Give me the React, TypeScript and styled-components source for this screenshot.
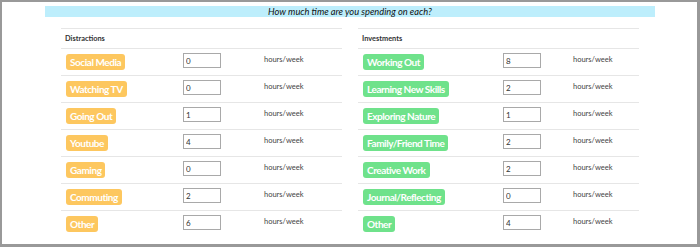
import styled, { createGlobalStyle } from 'styled-components';

const GlobalStyle = createGlobalStyle`
  html, body {
    margin: 0;
    padding: 0;
    background: #ffffff;
  }
  body {
    font-family: Lato, "Liberation Sans", sans-serif;
    color: #333;
  }
`;

const Frame = styled.div`
  box-sizing: border-box;
  width: 700px;
  height: 247px;
  border-style: solid;
  border-color: #999999;
  border-width: 2px 3px 3px 2px;
  background: #fff;
  overflow: hidden;
`;

const Banner = styled.div`
  margin: 4px 42px 0 43px;
  height: 11px;
  background: #bdeefc;
  font-size: 9.3px;
  font-style: italic;
  line-height: 11px;
  text-align: center;
  color: #111;
`;

const Tables = styled.div`
  display: grid;
  grid-template-columns: 281px 281px;
  column-gap: 16px;
  padding: 0 58px 0 59px;
  margin-top: 11px;
`;

const Table = styled.div<{ $cols: string }>`
  display: grid;
  grid-template-columns: ${p => p.$cols};
`;

const HeaderCell = styled.div`
  grid-column: 1 / -1;
  border-top: 1px solid #e6e6e6;
  height: 19px;
  padding-left: 4px;
  font-size: 7.4px;
  font-weight: 700;
  line-height: 19px;
  color: #333;
`;

const Cell = styled.div`
  border-top: 1px solid #e6e6e6;
  box-sizing: content-box;
`;

const BadgeCell = styled(Cell)`
  display: flex;
  align-items: flex-start;
  padding-left: 5px;
  padding-top: 5px;
  height: 21px;
`;

const Badge = styled.span<{ $tone: 'warm' | 'fresh' }>`
  display: block;
  height: 16px;
  padding: 0 4px;
  border-radius: 3px;
  background: ${p => (p.$tone === 'warm' ? '#fdc75f' : '#6fe28b')};
  color: #fff;
  font-size: 10px;
  font-weight: 700;
  letter-spacing: -0.45px;
  line-height: 16px;
  white-space: nowrap;
`;

const InputCell = styled(Cell)`
  display: flex;
  align-items: flex-start;
  padding-top: 4px;
  height: 22px;
`;

const HoursInput = styled.input`
  box-sizing: border-box;
  width: 38px;
  height: 15px;
  border: 1px solid #a9a9a9;
  padding: 0 2px;
  font-family: Lato, "Liberation Sans", sans-serif;
  font-size: 8px;
  color: #333;
  outline: none;
`;

const UnitCell = styled(Cell)`
  padding-top: 6px;
  height: 20px;
  font-size: 7.5px;
  line-height: 9px;
  color: #444;
`;

type Item = { label: string; hours: number };

const distractions: Item[] = [
  { label: 'Social Media', hours: 0 },
  { label: 'Watching TV', hours: 0 },
  { label: 'Going Out', hours: 1 },
  { label: 'Youtube', hours: 4 },
  { label: 'Gaming', hours: 0 },
  { label: 'Commuting', hours: 2 },
  { label: 'Other', hours: 6 },
];

const investments: Item[] = [
  { label: 'Working Out', hours: 8 },
  { label: 'Learning New Skills', hours: 2 },
  { label: 'Exploring Nature', hours: 1 },
  { label: 'Family/Friend Time', hours: 2 },
  { label: 'Creative Work', hours: 2 },
  { label: 'Journal/Reflecting', hours: 0 },
  { label: 'Other', hours: 4 },
];

const Row = ({ item, tone }: { item: Item; tone: 'warm' | 'fresh' }) => (
  <>
    <BadgeCell>
      <Badge $tone={tone}>{item.label}</Badge>
    </BadgeCell>
    <InputCell>
      <HoursInput type="text" defaultValue={String(item.hours)} />
    </InputCell>
    <UnitCell>hours/week</UnitCell>
  </>
);

const TimeTable = ({
  title,
  items,
  tone,
  cols,
}: {
  title: string;
  items: Item[];
  tone: 'warm' | 'fresh';
  cols: string;
}) => (
  <Table $cols={cols}>
    <HeaderCell>{title}</HeaderCell>
    {items.map(item => (
      <Row key={item.label} item={item} tone={tone} />
    ))}
  </Table>
);

export default function App() {
  return (
    <>
      <GlobalStyle />
      <Frame>
        <Banner>How much time are you spending on each?</Banner>
        <Tables>
          <TimeTable title="Distractions" items={distractions} tone="warm" cols="122px 81px 1fr" />
          <TimeTable title="Investments" items={investments} tone="fresh" cols="145px 70px 1fr" />
        </Tables>
      </Frame>
    </>
  );
}
